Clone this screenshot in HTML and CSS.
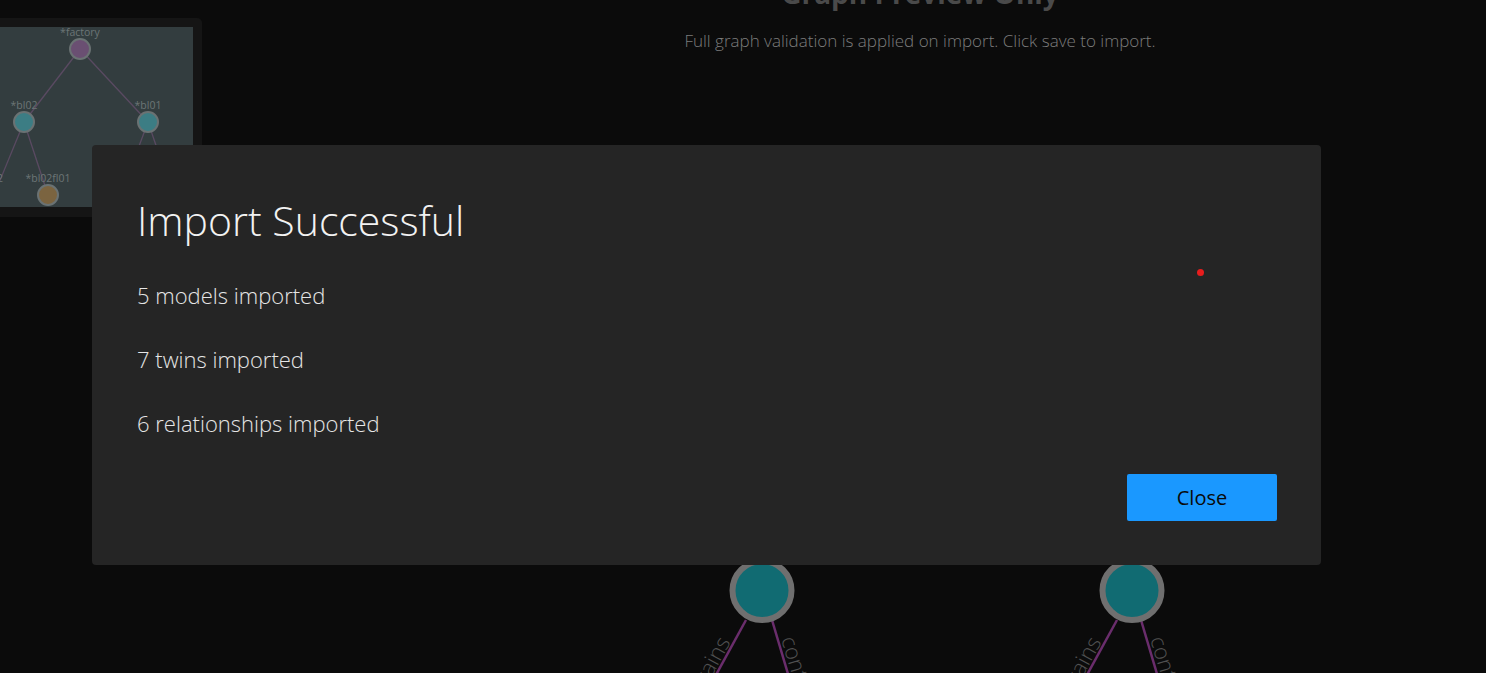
FILE: index.html
```html
<!DOCTYPE html>
<html>
<head>
<meta charset="utf-8">
<link rel="stylesheet" href="styles.css">
</head>
<body>
<div class="app">
  <svg class="graph" width="1486" height="673" viewBox="0 0 1486 673">
    <line x1="746" y1="620" x2="711" y2="684" class="edge"/>
    <line x1="772" y1="620" x2="791" y2="684" class="edge"/>
    <line x1="1117" y1="620" x2="1082" y2="684" class="edge"/>
    <line x1="1141" y1="620" x2="1160" y2="684" class="edge"/>
    <text class="elabel end" transform="translate(731,642) rotate(-61)">contains</text>
    <text class="elabel" transform="translate(781,639) rotate(73)">contains</text>
    <text class="elabel end" transform="translate(1102,642) rotate(-61)">contains</text>
    <text class="elabel" transform="translate(1150,639) rotate(73)">contains</text>
    <circle cx="762" cy="590.5" r="29.5" class="node"/>
    <circle cx="1132" cy="590.5" r="29.5" class="node"/>
  </svg>

  <header class="preview-head">
    <h2 class="preview-title">Graph Preview Only</h2>
    <p class="preview-sub">Full graph validation is applied on import. Click save to import.</p>
  </header>

  <div class="minimap">
    <svg class="minimap-canvas" width="193" height="180" viewBox="0 0 193 180">
      <line x1="80" y1="22" x2="24" y2="95" class="medge"/>
      <line x1="80" y1="22" x2="148" y2="95" class="medge"/>
      <line x1="24" y1="95" x2="-6" y2="168" class="medge"/>
      <line x1="24" y1="95" x2="48" y2="168" class="medge"/>
      <line x1="148" y1="95" x2="135" y2="130" class="medge"/>
      <line x1="148" y1="95" x2="160" y2="130" class="medge"/>
      <circle cx="80" cy="22" r="10" class="mnode purple"/>
      <circle cx="24" cy="95" r="10" class="mnode teal"/>
      <circle cx="148" cy="95" r="10" class="mnode teal"/>
      <circle cx="48" cy="168" r="10" class="mnode brown"/>
      <text x="80" y="9" class="mlabel">*factory</text>
      <text x="24" y="82" class="mlabel">*bl02</text>
      <text x="148" y="82" class="mlabel">*bl01</text>
      <text x="48" y="155" class="mlabel">*bl02fl01</text>
      <text x="0" y="155" class="mlabel">2</text>
    </svg>
  </div>

  <div class="modal">
    <h1 class="modal-title">Import Successful</h1>
    <p class="modal-line">5 models imported</p>
    <p class="modal-line">7 twins imported</p>
    <p class="modal-line">6 relationships imported</p>
    <div class="modal-footer">
      <button class="btn-close">Close</button>
    </div>
    <span class="dot"></span>
  </div>
</div>
</body>
</html>
```

FILE: styles.css
```css
html, body {
  margin: 0;
  padding: 0;
  background: #0b0b0b;
  overflow: hidden;
}
body {
  font-family: "Open Sans", "Noto Sans", sans-serif;
  width: 1486px;
  height: 673px;
}
.app {
  position: relative;
  display: flow-root;
  width: 1486px;
  height: 673px;
}
.graph {
  position: absolute;
  left: 0;
  top: 0;
}
.edge {
  stroke: #6a2d6c;
  stroke-width: 2.5;
}
.elabel {
  fill: #505050;
  font-family: "Open Sans", sans-serif;
  font-weight: 300;
  font-size: 22px;
}
.elabel.end {
  text-anchor: end;
}
.node {
  fill: #116b72;
  stroke: #6f6f6f;
  stroke-width: 6;
}
.preview-head {
  position: relative;
  margin-left: 460px;
  width: 920px;
  text-align: center;
}
.preview-title {
  margin: -25px 0 0;
  font-size: 28px;
  font-weight: 700;
  color: #4a4a4a;
  line-height: 36px;
}
.preview-sub {
  margin: 19px 0 0;
  font-size: 17px;
  font-weight: 300;
  color: #7c7c7c;
  line-height: 22px;
}
.minimap {
  position: absolute;
  left: 0;
  top: 18px;
  width: 193px;
  height: 180px;
  padding: 9px 9px 10px 0;
  background: #151515;
  border-radius: 0 5px 5px 0;
}
.minimap-canvas {
  display: block;
  background: #333d3f;
}
.medge {
  stroke: #5a4a62;
  stroke-width: 1.3;
}
.mnode {
  stroke: #6a7273;
  stroke-width: 2;
}
.mnode.purple { fill: #6a4f72; }
.mnode.teal { fill: #3c7d84; }
.mnode.brown { fill: #7b6440; }
.mlabel {
  fill: #6c7576;
  font-family: "Open Sans", sans-serif;
  font-size: 10.5px;
  text-anchor: middle;
}
.modal {
  position: absolute;
  left: 92px;
  top: 145px;
  width: 1229px;
  height: 420px;
  box-sizing: border-box;
  padding: 44px 44px 44px 45px;
  background: #252525;
  border-radius: 4px;
  display: flex;
  flex-direction: column;
}
.modal-title {
  margin: 6px 0 35px;
  font-size: 41px;
  font-weight: 300;
  color: #f2f2f2;
  line-height: 50px;
}
.modal-line {
  margin: 0 0 34px;
  font-size: 22px;
  font-weight: 300;
  color: #e6e6e6;
  line-height: 30px;
}
.modal-footer {
  margin-top: auto;
  display: flex;
  justify-content: flex-end;
}
.btn-close {
  width: 150px;
  height: 47px;
  border: none;
  border-radius: 2px;
  background: #1a98ff;
  color: #0a0a0a;
  font-family: "Open Sans", sans-serif;
  font-size: 20px;
  font-weight: 500;
}
.dot {
  position: absolute;
  left: 1105px;
  top: 124px;
  width: 7px;
  height: 7px;
  border-radius: 50%;
  background: #e81d1d;
}
```
